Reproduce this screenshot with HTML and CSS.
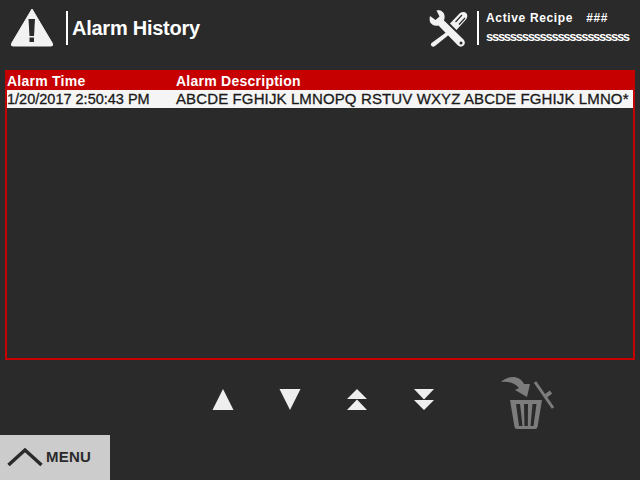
FILE: index.html
```html
<!DOCTYPE html>
<html lang="en">
<head>
    <meta charset="UTF-8">
    <title>Alarm History</title>
    <link rel="stylesheet" href="styles.css">
</head>
<body>

<div class="screen">
    <header class="top-bar">
        <svg class="warn-icon" width="44" height="40" viewBox="0 0 44 40">
            <path d="M22 1 L42.500 35.500 Q43.500 38 41 38 L3 38 Q0.500 38 1.500 35.500 Z" fill="#f2f2f2" stroke="#f2f2f2" stroke-width="1" stroke-linejoin="round"/>
            <path d="M18.500 11 H25 L24 28 H19.500 Z" fill="#2a2a2a"/>
            <rect x="19.500" y="29.500" width="4.500" height="4.500" fill="#2a2a2a"/>
        </svg>
        <div class="divider"></div>
        <span class="page-title">Alarm History</span>

        <div class="recipe">
            <svg class="tools-icon" width="40" height="38" viewBox="0 0 40 38">
                <!-- wrench -->
                <path d="M1 6 L6.500 10 L10.500 6.500 L7.500 0.500 C11 -0.500 15 1.500 15.500 5.500 C15.800 7.500 15.500 9 15 10.500 L34.500 29.500 C36.500 32 36 34 34.500 35.500 C33 37 30.500 37 29 35.500 L9.500 15.500 C6 16.500 2.500 15 1 12 C0.500 10 0.500 8 1 6 Z" fill="#f2f2f2"/>
                <circle cx="32" cy="33" r="1.500" fill="#2a2a2a"/>
                <!-- screwdriver -->
                <path d="M21 13.500 L31 3 C33.500 1.500 36.500 2 37.500 3.500 C38.800 5 38.500 7.500 37 9.500 L27.500 20 Z" fill="#f2f2f2"/>
                <path d="M26.500 12 L33 5 M30 14.500 L36 8" stroke="#2a2a2a" stroke-width="1.200"/>
                <path d="M19 21 L21.500 23.500 L6 36 Q4 37.500 2.500 36 Q1 34.500 2.500 33 Z" fill="#f2f2f2"/>
            </svg>
            <div class="divider"></div>
            <div class="recipe-text">
                <div class="recipe-line"><span class="recipe-label">Active Recipe</span><span>###</span></div>
                <div class="recipe-value">ssssssssssssssssssssssss</div>
            </div>
        </div>
    </header>

    <div class="alarm-table">
        <div class="alarm-row alarm-head">
            <span class="col-time">Alarm Time</span>
            <span>Alarm Description</span>
        </div>
        <div class="alarm-row alarm-item">
            <span class="col-time">1/20/2017 2:50:43 PM</span>
            <span class="col-desc">ABCDE FGHIJK LMNOPQ RSTUV WXYZ ABCDE FGHIJK LMNO*</span>
        </div>
    </div>

    <div class="bottom-bar">
        <div class="menu-btn">
            <svg width="36" height="20" viewBox="0 0 36 20">
                <path d="M1.500 18 L18 3 L34.500 18" fill="none" stroke="#2a2a2a" stroke-width="3.500"/>
            </svg>
            <span>MENU</span>
        </div>

        <div class="nav-btns">
            <svg width="22" height="21" viewBox="0 0 22 21"><path d="M11 0 L21.500 21 H0.500 Z" fill="#eee"/></svg>
            <svg width="22" height="21" viewBox="0 0 22 21"><path d="M0.500 0 H21.500 L11 21 Z" fill="#eee"/></svg>
            <svg width="22" height="21" viewBox="0 0 22 21"><path d="M11 0 L21 10 H1 Z M11 10.500 L21 21 H1 Z" fill="#eee"/></svg>
            <svg width="22" height="21" viewBox="0 0 22 21"><path d="M1 0 H21 L11 10.500 Z M1 11 H21 L11 21 Z" fill="#eee"/></svg>
        </div>

        <svg class="trash-icon" width="56" height="56" viewBox="0 0 56 56">
            <!-- arrow -->
            <path d="M1 6 C8 -1 20 -1 24 8 L30 8 L27 21 L15 14 L19 12 C15 7 9 5 1 6 Z" fill="#7c7c7c"/>
            <!-- lid, tipped open -->
            <path d="M35 6 L53 32" stroke="#7c7c7c" stroke-width="3" fill="none"/>
            <path d="M44.500 21 L51 16" stroke="#7c7c7c" stroke-width="4" fill="none"/>
            <!-- can -->
            <path d="M10 24 H42 L37.500 51 Q37 53 35 53 H17 Q15 53 14.500 51 Z" fill="#7c7c7c"/>
            <path d="M16 28 H20 L22.500 50 H19 Z M24 28 H28 L27.800 50 H24.500 Z M32.500 28 H36.500 L33.500 50 H30.500 Z" fill="#2a2a2a"/>
        </svg>
    </div>
</div>

</body>
</html>
```

FILE: styles.css
```css
/* Page */
html, body {
    margin: 0;
    padding: 0;
    background-color: #2a2a2a;
    font-family: "Liberation Sans", Arial, sans-serif;
    overflow: hidden;
}

.screen {
    width: 640px;
    height: 480px;
    display: flex;
    flex-direction: column;
}

/* Header */
.top-bar {
    height: 70px;
    display: flex;
    align-items: flex-start;
    padding: 8px 10px 0 10px;
    box-sizing: border-box;
    color: #fff;
}

.warn-icon {
    margin-right: 12px;
}

.divider {
    width: 2px;
    height: 34px;
    margin-top: 3px;
    background-color: #fff;
}

.page-title {
    margin: 9px 0 0 4px;
    font-size: 20px;
    line-height: 23px;
    font-weight: bold;
    letter-spacing: -0.25px;
}

.recipe {
    margin-left: auto;
    display: flex;
    align-items: flex-start;
}

.tools-icon {
    margin: 2px 8px 0 0;
}

.recipe-text {
    margin-left: 7px;
    width: 144px;
    padding-top: 3px;
}

.recipe-line {
    font-size: 12px;
    line-height: 15px;
    font-weight: bold;
    letter-spacing: 0.65px;
}

.recipe-label {
    margin-right: 13px;
}

.recipe-value {
    margin-top: 4px;
    font-size: 13px;
    line-height: 13px;
    font-weight: bold;
    letter-spacing: -1.28px;
    white-space: nowrap;
}

/* Alarm table */
.alarm-table {
    height: 290px;
    margin: 0 5px;
    border: 2px solid #c60000;
    border-top: 0;
    box-sizing: border-box;
}

.alarm-row {
    display: flex;
    font-size: 14px;
    white-space: nowrap;
}

.col-time {
    width: 169px;
}

.alarm-head {
    height: 20px;
    line-height: 22px;
    background-color: #c60000;
    color: #fff;
    font-weight: bold;
    letter-spacing: 0.25px;
}

.alarm-item {
    height: 18px;
    line-height: 18px;
    background-color: #f5f5f5;
    color: #1a1a1a;
    font-size: 14.500px;
    -webkit-text-stroke: 0.3px #1a1a1a;
}

.col-desc {
    font-size: 15px;
    letter-spacing: 0.12px;
}

/* Bottom buttons */
.bottom-bar {
    flex: 1;
    position: relative;
    display: flex;
    align-items: flex-end;
}

.menu-btn {
    width: 110px;
    height: 45px;
    display: flex;
    align-items: center;
    gap: 3px;
    padding: 0 0 2px 7px;
    box-sizing: border-box;
    background-color: #cccccc;
    color: #2a2a2a;
    font-size: 15px;
    font-weight: bold;
    letter-spacing: 0.2px;
}

.nav-btns {
    position: absolute;
    left: 212px;
    top: 29px;
    display: flex;
    gap: 45px;
}

.trash-icon {
    position: absolute;
    left: 500px;
    top: 16px;
}
```
